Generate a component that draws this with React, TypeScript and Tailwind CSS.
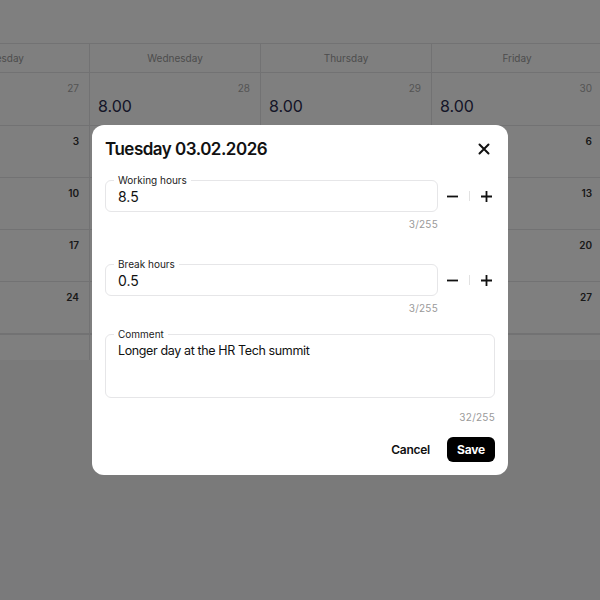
import React from "react";

type Cell = { day: number; muted?: boolean; hours?: string };

const columns: { name: string; cells: Cell[] }[] = [
  { name: "Tuesday", cells: [{ day: 27, muted: true }, { day: 3 }, { day: 10 }, { day: 17 }, { day: 24 }] },
  { name: "Wednesday", cells: [{ day: 28, muted: true, hours: "8.00" }, { day: 4 }, { day: 11 }, { day: 18 }, { day: 25 }] },
  { name: "Thursday", cells: [{ day: 29, muted: true, hours: "8.00" }, { day: 5 }, { day: 12 }, { day: 19 }, { day: 26 }] },
  { name: "Friday", cells: [{ day: 30, muted: true, hours: "8.00" }, { day: 6 }, { day: 13 }, { day: 20 }, { day: 27 }] },
];

function Field({ label, value }: { label: string; value: string }) {
  return (
    <div className="flex items-start">
      <div className="flex w-[333px] flex-col">
        <div className="relative flex h-8 items-center rounded-md border border-[#e6e6e8] pl-3 text-[14px] text-[#111]">
          <span className="absolute -top-[7px] left-2 bg-white px-[4px] text-[10px] leading-[12px] text-[#222]">{label}</span>
          {value}
        </div>
        <div className="mt-[6px] text-right text-[10px] leading-[12px] tracking-wide text-[#9a9a9a]">3/255</div>
      </div>
      <div className="flex h-8 w-[57px] items-center pl-[8px]">
        <svg width="13" height="13" viewBox="0 0 13 13" className="text-[#111]">
          <path d="M1 6.5h11" stroke="currentColor" strokeWidth="1.8" />
        </svg>
        <div className="mx-[10px] h-[10px] w-px bg-[#e2e2e2]" />
        <svg width="13" height="13" viewBox="0 0 13 13" className="text-[#111]">
          <path d="M1 6.5h11M6.5 1v11" stroke="currentColor" strokeWidth="1.8" />
        </svg>
      </div>
    </div>
  );
}

export default function App() {
  return (
    <div className="relative h-[600px] w-[600px] overflow-hidden bg-[#f4f4f5]" style={{ fontFamily: "Inter, 'Noto Sans', sans-serif" }}>
      <div className="h-[43px] bg-white" />
      <div className="ml-[-81px] flex border-t border-[#e4e4e7] bg-white">
        {columns.map((col) => (
          <div key={col.name} className="flex w-[171px] shrink-0 flex-col border-r border-[#e4e4e7]">
            <div className="flex h-[29px] items-center justify-center border-b border-[#e4e4e7] text-[10px] text-[#9a9a9a]">
              {col.name}
            </div>
            {col.cells.map((c, i) => (
              <div key={i} className={`flex ${i === 0 ? "h-[53px]" : "h-[52px]"} flex-col border-b border-[#e4e4e7] px-2 pt-[9px]`}>
                <div className={`pr-[2px] text-right text-[10px] leading-[12px] ${c.muted ? "text-[#a8a8a8]" : "font-semibold text-[#333]"}`}>
                  {c.day}
                </div>
                {c.hours && <div className="mt-[2px] text-[16px] leading-[20px] text-[#2c2c50]">{c.hours}</div>}
              </div>
            ))}
            <div className="h-[26px] border-t border-[#e4e4e7]" />
          </div>
        ))}
      </div>

      <div className="absolute inset-0 flex items-center justify-center bg-black/50">
        <div className="flex w-[416px] flex-col rounded-xl bg-white px-[13px] pb-[13px] pt-3">
          <div className="flex h-6 items-center justify-between">
            <h2 className="text-[17px] font-semibold leading-6 tracking-[-0.03em] text-[#111]">Tuesday 03.02.2026</h2>
            <svg width="12" height="12" viewBox="0 0 12 12" className="mr-[5px] text-[#111]">
              <path d="M1.5 1.5l9 9M10.5 1.5l-9 9" stroke="currentColor" strokeWidth="2" strokeLinecap="round" />
            </svg>
          </div>
          <div className="mt-[19px]">
            <Field label="Working hours" value="8.5" />
          </div>
          <div className="mt-[34px]">
            <Field label="Break hours" value="0.5" />
          </div>
          <div className="relative mt-[20px] h-16 rounded-md border border-[#e6e6e8] px-3 pt-[8px] text-[12.5px] leading-[16px] tracking-[-0.03em] text-[#111]">
            <span className="absolute -top-[7px] left-2 bg-white px-[4px] text-[10px] leading-[12px] tracking-normal text-[#222]">Comment</span>
            Longer day at the HR Tech summit
          </div>
          <div className="mt-[13px] text-right text-[10px] leading-[12px] tracking-wide text-[#9a9a9a]">32/255</div>
          <div className="mt-[14px] flex items-center justify-end gap-[17px]">
            <button className="text-[12px] font-semibold tracking-[-0.02em] text-[#111]">Cancel</button>
            <button className="h-[25px] w-[48px] rounded-md bg-black text-[12px] font-bold tracking-[-0.02em] text-white">Save</button>
          </div>
        </div>
      </div>
    </div>
  );
}
